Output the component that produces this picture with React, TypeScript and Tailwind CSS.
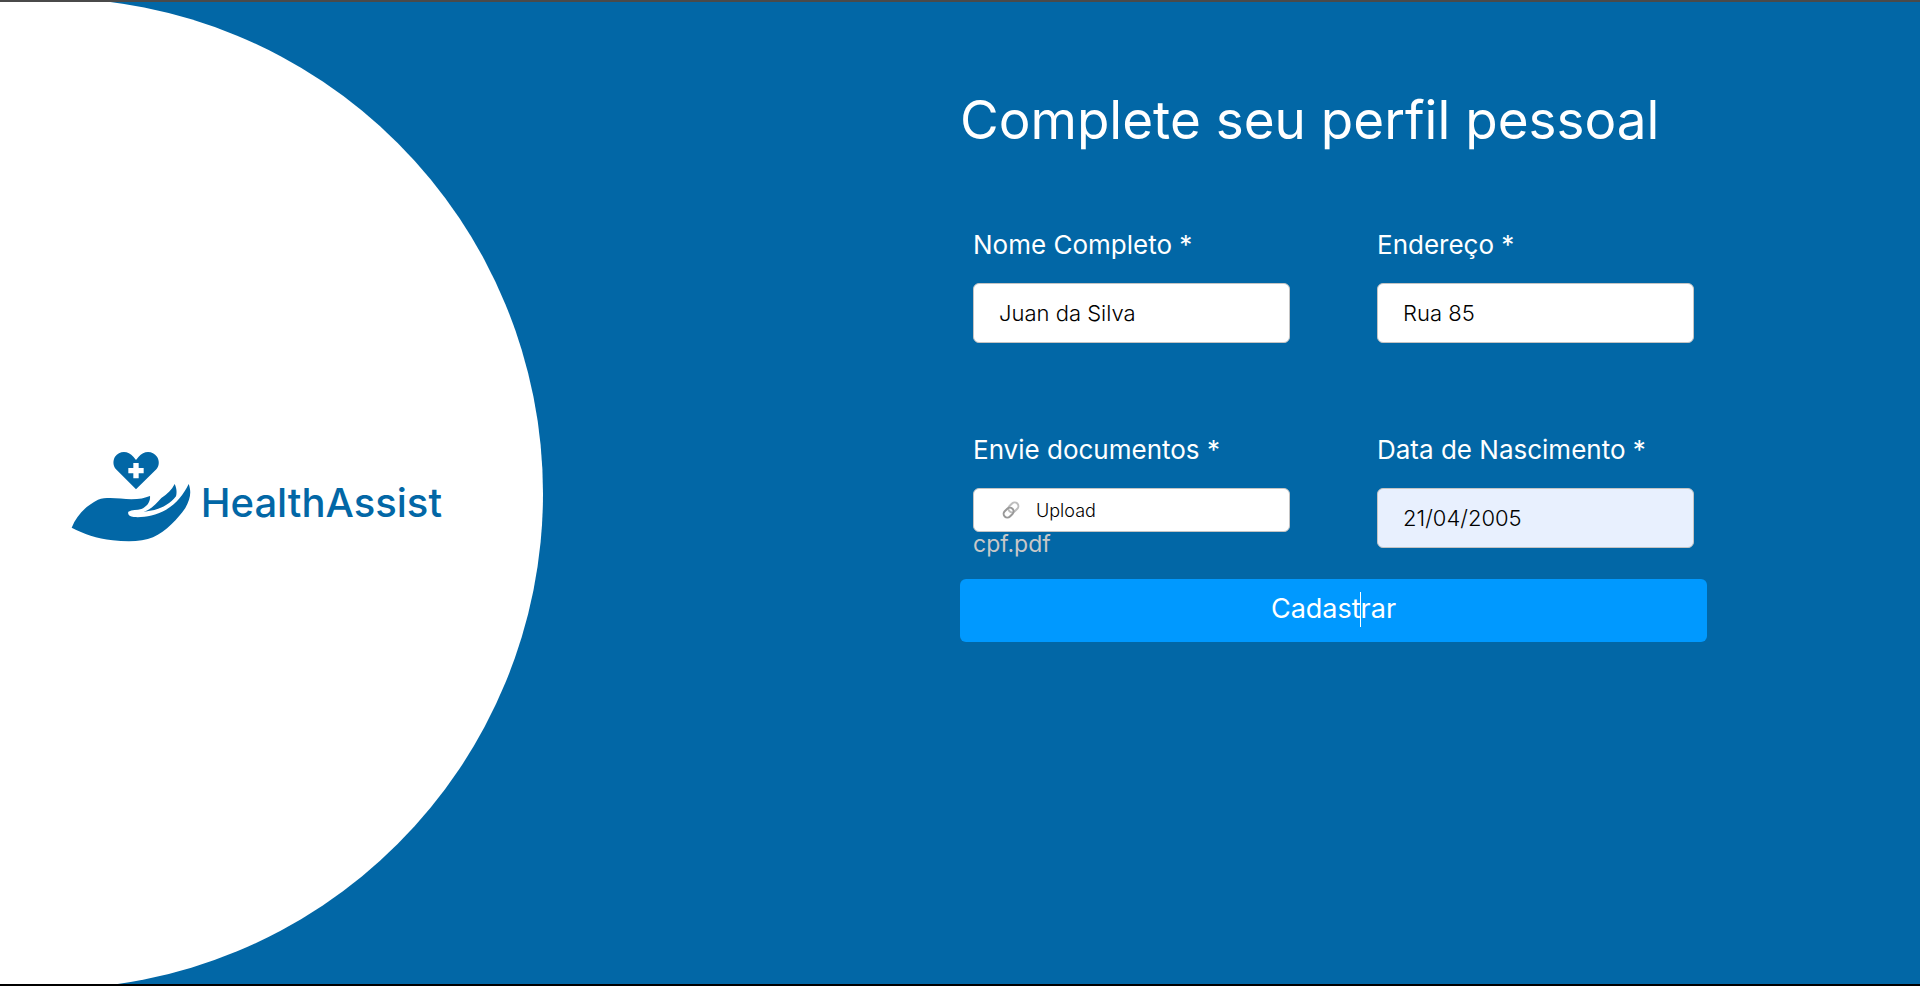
import type { ReactNode } from "react";

const inputClass =
  "h-[60px] w-full rounded-md border border-[#c4c4c4] px-[25px] font-light text-[22px] text-black outline-none";

function Logo() {
  return (
    <div className="flex items-center gap-2.5 pt-1.5">
      <svg viewBox="30 30 360 279" className="h-[93px] w-[120px] shrink-0" fill="#0267a6" aria-hidden="true">
        <path d="M225 148 L165 88 C156 78 155 62 162 50 C175 31 202 31 217 50 L225 60 L233 50 C248 31 275 31 288 50 C296 62 295 78 286 88 Z" />
        <path fill="#fff" d="M217 69h16v15h15v16h-15v15h-16v-15h-15V84h15z" />
        <path d="M32 263 C47 226 75 197 111 179 C142 169 177 177 211 178 C235 178 252 174 267 168 C269 185 257 201 241 207 C228 211 213 209 202 215 C199 224 206 230 218 231 C247 233 282 228 314 210 C349 189 367 164 383 132 C392 156 388 177 373 204 C352 235 315 274 276 292 C245 306 198 306 155 301 C107 295 68 282 32 263 Z" />
        <path d="M247 216 C270 209 286 191 301 174 C319 162 332 150 341 132 C347 145 348 157 345 169 C329 190 306 203 280 210 C268 213 257 213 247 216 Z" />
      </svg>
      <span className="mt-3.5 text-[40px] leading-[46px] font-medium text-[#0267a6]">HealthAssist</span>
    </div>
  );
}

function LinkIcon() {
  return (
    <svg viewBox="0 0 18 18" className="size-[18px]" fill="none" strokeWidth="2" aria-hidden="true">
      <rect x="5.9" y="2.7" width="11" height="7.4" rx="3.7" transform="rotate(-45 11.4 6.4)" stroke="#bdbdbd" />
      <rect x="1.1" y="7.9" width="11" height="7.4" rx="3.7" transform="rotate(-45 6.6 11.6)" stroke="#999" />
    </svg>
  );
}

function Field({ id, label, children }: { id: string; label: string; children: ReactNode }) {
  return (
    <div className="flex h-[122px] flex-col">
      <label htmlFor={id} className="mb-[19px] text-[26px] leading-[38px] whitespace-nowrap">
        {label}
      </label>
      {children}
    </div>
  );
}

export default function App() {
  return (
    <main className="flex min-h-screen overflow-hidden border-t-2 border-b-2 border-t-[#4a4a4a] border-b-black bg-[#0267a6] font-['Inter',sans-serif] text-white">
      <aside className="flex w-1/2 items-center">
        <div className="-my-4 -ml-[448px] flex size-[991px] shrink-0 items-center justify-end rounded-full bg-white pr-[101px]">
          <Logo />
        </div>
      </aside>
      <section className="w-1/2 pt-[88px]">
        <form className="w-[747px] max-w-full" onSubmit={(e) => e.preventDefault()}>
          <h1 className="text-[53px] leading-[60px] whitespace-nowrap">Complete seu perfil pessoal</h1>
          <div className="mt-[76px] grid grid-cols-2 gap-x-[87px] gap-y-[83px] px-[13px]">
            <Field id="name" label="Nome Completo *">
              <input id="name" type="text" defaultValue="Juan da Silva" className={`${inputClass} bg-white`} />
            </Field>
            <Field id="address" label="Endereço *">
              <input id="address" type="text" defaultValue="Rua 85" className={`${inputClass} bg-white`} />
            </Field>
            <Field id="documents" label="Envie documentos *">
              <label
                htmlFor="documents"
                className="flex h-11 shrink-0 cursor-pointer items-center gap-4 rounded-md border border-[#c4c4c4] bg-white px-7 text-[18px] font-light text-black"
              >
                <LinkIcon />
                Upload
              </label>
              <input id="documents" type="file" className="sr-only" />
              <span className="text-[23px] leading-6 text-[#c8c8c8]">cpf.pdf</span>
            </Field>
            <Field id="birth" label="Data de Nascimento *">
              <input id="birth" type="text" defaultValue="21/04/2005" className={`${inputClass} bg-[#e8f0fe]`} />
            </Field>
          </div>
          <button type="submit" className="mt-[26px] h-[63px] w-full rounded-md bg-[#0099ff] pb-0.5 text-[27px]">
            <span className="relative">
              Cadast
              <span className="absolute top-0 right-0 h-[35px] w-px bg-white" />
            </span>
            rar
          </button>
        </form>
      </section>
    </main>
  );
}
